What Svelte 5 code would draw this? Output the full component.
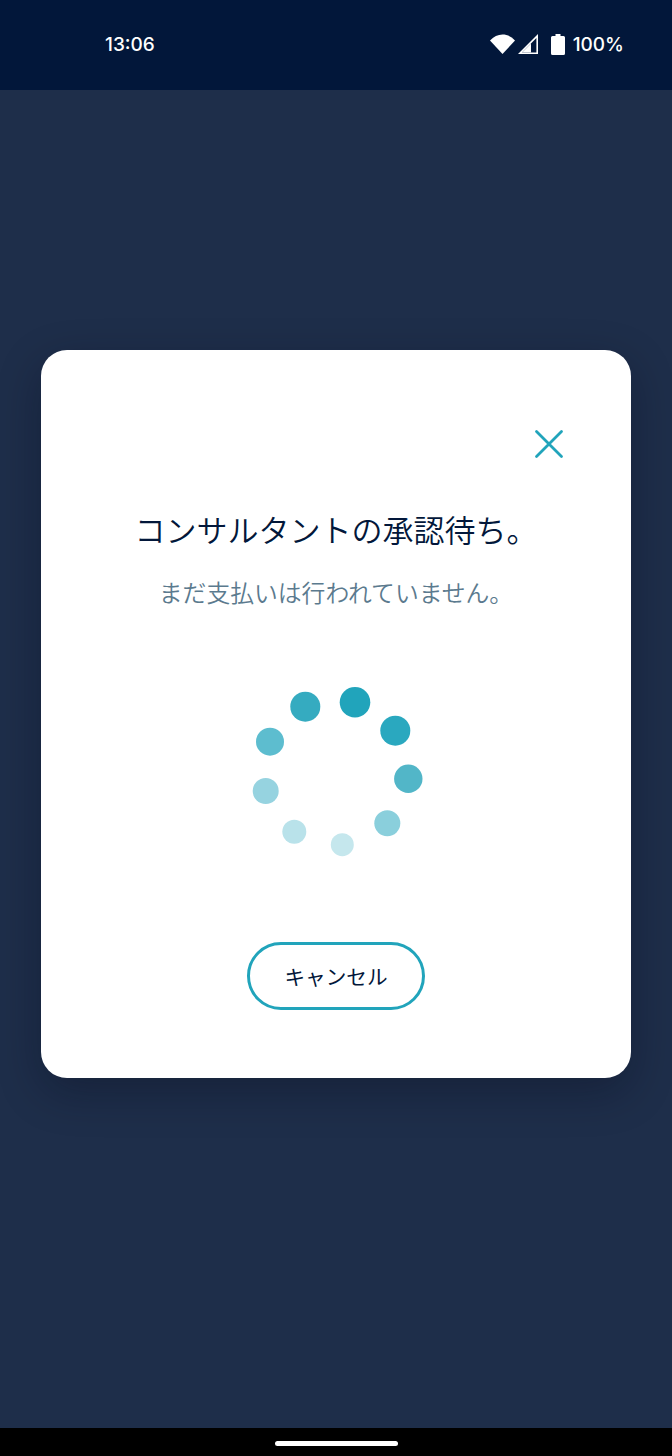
<script>
  const dots = [
    { x: 355, y: 702.3, r: 15.3, c: '#21a4bb' },
    { x: 395.3, y: 730.7, r: 15, c: '#2aa8bf' },
    { x: 408.3, y: 778.7, r: 14.2, c: '#52b6c8' },
    { x: 387.3, y: 823.3, r: 13, c: '#8acfdc' },
    { x: 342.3, y: 844.7, r: 11.5, c: '#c5e7ed' },
    { x: 294.3, y: 831.7, r: 12, c: '#b9e2ea' },
    { x: 265.7, y: 791, r: 13, c: '#96d3e0' },
    { x: 270, y: 741.7, r: 14, c: '#5dbdcf' },
    { x: 305.3, y: 706.7, r: 15, c: '#35abc0' }
  ];
</script>

<div class="screen">
  <div class="status">
    <span class="time">13:06</span>
    <div class="status-right">
      <svg width="25" height="20" viewBox="0 0 25 20">
        <path d="M0 6.6 C7 -1.6 18 -1.6 25 6.6 L12.5 20 Z" fill="#fff" />
      </svg>
      <svg width="20" height="20" viewBox="0 0 20 20">
        <path d="M20 0 V20 H0 Z M18.4 4 L4 18.4 H18.4 Z" fill="#fff" fill-rule="evenodd" />
        <path d="M13 9.4 L4 18.4 H13 Z" fill="#fff" />
      </svg>
      <svg class="battery" width="14" height="21" viewBox="0 0 14 21">
        <path d="M4.5 0 H9.5 V2 H12.5 Q14 2 14 3.5 V19.5 Q14 21 12.5 21 H1.5 Q0 21 0 19.5 V3.5 Q0 2 1.5 2 H4.5 Z" fill="#fff" />
      </svg>
      <span class="pct">100%</span>
    </div>
  </div>

  <main>
    <div class="card">
      <div class="close-row">
        <svg width="30" height="30" viewBox="0 0 30 30">
          <path d="M2.5 2.5 L27.5 27.5 M27.5 2.5 L2.5 27.5" stroke="#21a4bb" stroke-width="2.8" fill="none" stroke-linecap="round" />
        </svg>
      </div>
      <h1>コンサルタントの承認待ち。</h1>
      <p>まだ支払いは行われていません。</p>
      <svg class="spinner" width="180" height="172" viewBox="246 685 180 172">
        {#each dots as d}
          <circle cx={d.x} cy={d.y} r={d.r} fill={d.c} />
        {/each}
      </svg>
      <button type="button">キャンセル</button>
    </div>
  </main>

  <div class="nav">
    <div class="handle"></div>
  </div>
</div>

<style>
  :global(body) {
    background: #1e2e4a;
  }

  .screen {
    width: 672px;
    height: 1456px;
    display: flex;
    flex-direction: column;
    background: #1e2e4a;
    font-family: "Noto Sans CJK JP", "Noto Sans", sans-serif;
    overflow: hidden;
  }

  .status {
    height: 90px;
    flex: none;
    display: flex;
    align-items: center;
    justify-content: space-between;
    padding: 0 48px 2px 105px;
    box-sizing: border-box;
    background: #02173a;
    color: #fff;
    font-family: Inter, "Open Sans", sans-serif;
    font-size: 19px;
    font-weight: 500;
  }

  .status-right {
    display: flex;
    align-items: center;
    gap: 3px;
  }

  .battery {
    margin: 0 5px 0 10px;
  }

  main {
    flex: 1;
    padding: 260px 41px 0;
    box-sizing: border-box;
  }

  .card {
    height: 728px;
    box-sizing: border-box;
    display: flex;
    flex-direction: column;
    align-items: center;
    padding-top: 79px;
    background: #fff;
    border-radius: 26px;
    box-shadow: 0 14px 44px rgba(5, 10, 25, 0.32);
  }

  .close-row {
    align-self: flex-end;
    height: 30px;
    padding-right: 67px;
  }

  h1 {
    margin: 48px 0 0;
    box-sizing: border-box;
    width: 100%;
    text-align: center;
    font-size: 31px;
    line-height: 44px;
    font-weight: 350;
    color: #02173a;
  }

  p {
    margin: 24px 0 0;
    font-size: 23.8px;
    line-height: 34px;
    font-weight: 350;
    color: #5b7a8e;
  }

  .spinner {
    margin: 76px 0 0 0;
    display: block;
  }

  button {
    margin-top: 85px;
    width: 178px;
    height: 68px;
    padding: 0;
    background: #fff;
    border: 3.5px solid #21a4bb;
    border-radius: 34px;
    font-family: inherit;
    font-size: 20.6px;
    color: #02173a;
  }

  .nav {
    height: 28px;
    flex: none;
    display: flex;
    justify-content: center;
    padding-top: 13px;
    box-sizing: border-box;
    background: #000;
  }

  .handle {
    width: 123px;
    height: 5px;
    border-radius: 2.5px;
    background: #fff;
  }
</style>
